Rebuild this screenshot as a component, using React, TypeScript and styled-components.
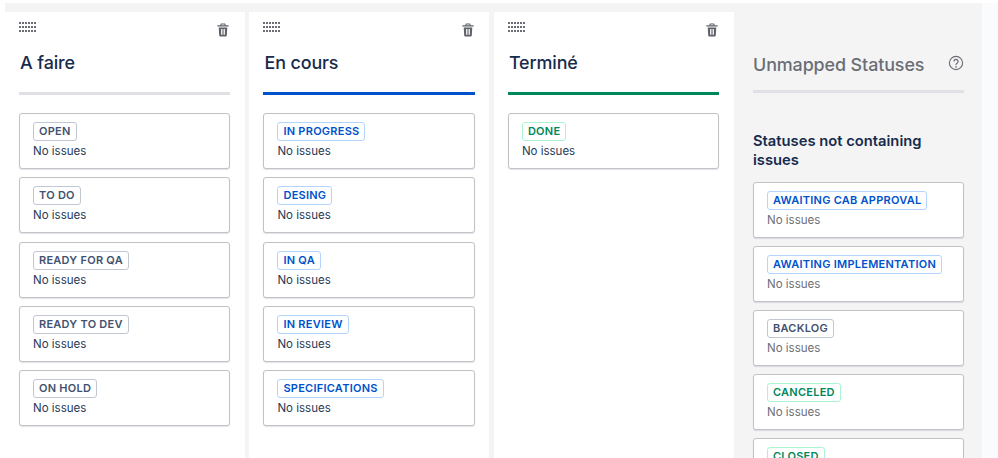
import React from 'react';
import styled, {createGlobalStyle} from 'styled-components';

const GlobalStyle = createGlobalStyle`
  html, body {
    margin: 0;
    padding: 0;
    background: #fff;
    font-family: Inter, "Liberation Sans", sans-serif;
    overflow: hidden;
  }
`

const Page = styled.div`
  width: 998px;
  height: 458px;
  padding: 3px 16px 0 5px;
  box-sizing: border-box;
  overflow: hidden;
`

const Board = styled.div`
  display: flex;
  gap: 4.45px;
  height: 455px;
  padding-top: 9px;
  box-sizing: border-box;
  background: #f4f4f5;
  box-shadow: 16px 0 0 #fafbfc;
`

const Column = styled.section`
  flex: 0 0 240px;
  padding: 0 14.8px 0 14px;
  box-sizing: border-box;
  background: #fff;
`

const ColumnTools = styled.div`
  display: flex;
  justify-content: space-between;
  height: 31px;
  padding-top: 10px;
  box-sizing: border-box;
`

const Trash = styled.svg`
  width: 12px;
  height: 14px;
  margin: 1px 1px 0 0;
  color: #5e6168;
`

const ColumnTitle = styled.h2<{$muted?: boolean}>`
  display: flex;
  justify-content: space-between;
  align-items: center;
  margin: 0;
  padding-left: ${props => props.$muted ? '0' : '1px'};
  height: 38px;
  font-size: 17.9px;
  font-weight: 500;
  line-height: 39px;
  letter-spacing: -0.1px;
  color: ${props => props.$muted ? '#6b6e76' : '#172b4d'};
`

const Rule = styled.div<{$color: string, $top: number}>`
  height: 3px;
  margin-top: ${props => props.$top}px;
  background: ${props => props.$color};
`

const CardList = styled.div<{$top: number, $gap: number}>`
  display: flex;
  flex-direction: column;
  gap: ${props => props.$gap}px;
  margin-top: ${props => props.$top}px;
`

const Card = styled.div`
  height: 56px;
  padding: 8px 13px 0;
  box-sizing: border-box;
  background: #fff;
  border: 1px solid #c1c2c6;
  border-radius: 3px;
  box-shadow: 0 1px 1px rgba(9, 30, 66, 0.12);
`

const tones = {
  grey: {text: '#42526e', border: '#c1c7d0'},
  blue: {text: '#0052cc', border: '#b3d4ff'},
  green: {text: '#00875a', border: '#abf5d1'}
}

const Lozenge = styled.span<{$tone: keyof typeof tones}>`
  display: block;
  width: fit-content;
  height: 19px;
  padding: 0 5px;
  box-sizing: border-box;
  font-size: 11px;
  font-weight: 600;
  line-height: 17px;
  letter-spacing: 0.25px;
  white-space: nowrap;
  background: #fff;
  color: ${props => tones[props.$tone].text};
  border: 1px solid ${props => tones[props.$tone].border};
  border-radius: 3px;
`

const IssueCount = styled.p<{$muted?: boolean}>`
  margin: 1px 0 0;
  font-size: 11.5px;
  line-height: 18px;
  color: ${props => props.$muted ? '#6b6e76' : '#253858'};
`

const UnmappedColumn = styled.section`
  flex: 1;
  min-width: 0;
  padding: 0 18px 0 14.7px;
  box-sizing: border-box;
`

const UnmappedHead = styled.div`
  padding-top: 33px;
`

const HelpIcon = styled.svg`
  width: 16px;
  height: 16px;
  margin-top: -2px;
  color: #6b6e76;
`

const SubTitle = styled.h3`
  margin: 38.5px 0 11.1px;
  font-size: 14.75px;
  font-weight: 600;
  line-height: 19.5px;
  color: #172b4d;
`

const DragDots = () => (
    <svg width="18" height="11" viewBox="0 0 18 11" fill="#6b6e76">
        {[0, 4, 8].map(y => [0, 3, 6, 9, 12, 15].map(x => (
            <rect key={`${x}-${y}`} x={x} y={y} width="2" height="2"/>
        )))}
    </svg>
)

const TrashIcon = () => (
    <Trash viewBox="0 0 14 16" fill="currentColor">
        <path d="M5 0.5h4a1 1 0 0 1 1 1V2.5h3a.6.6 0 0 1 0 1.5H1a.6.6 0 0 1 0-1.5h3V1.5a1 1 0 0 1 1-1zM5.2 1.6v.9h3.6v-.9z"/>
        <path fillRule="evenodd" d="M2 5h10l-.6 9.4a1.3 1.3 0 0 1-1.3 1.2H3.9a1.3 1.3 0 0 1-1.3-1.2zM4.8 6.8v6.8h1V6.8zM6.5 6.8v6.8h1V6.8zM8.2 6.8v6.8h1V6.8z"/>
    </Trash>
)

interface Status {
    name: string
    tone: keyof typeof tones
}

const StatusCard = (props: Status & {muted?: boolean}) => (
    <Card>
        <Lozenge $tone={props.tone}>{props.name}</Lozenge>
        <IssueCount $muted={props.muted}>No issues</IssueCount>
    </Card>
)

const columns: {title: string, rule: string, tone: keyof typeof tones, statuses: string[]}[] = [
    {title: 'A faire', rule: '#dfe1e6', tone: 'grey', statuses: ['OPEN', 'TO DO', 'READY FOR QA', 'READY TO DEV', 'ON HOLD']},
    {title: 'En cours', rule: '#0052cc', tone: 'blue', statuses: ['IN PROGRESS', 'DESING', 'IN QA', 'IN REVIEW', 'SPECIFICATIONS']},
    {title: 'Terminé', rule: '#00875a', tone: 'green', statuses: ['DONE']}
]

const unmapped: Status[] = [
    {name: 'AWAITING CAB APPROVAL', tone: 'blue'},
    {name: 'AWAITING IMPLEMENTATION', tone: 'blue'},
    {name: 'BACKLOG', tone: 'grey'},
    {name: 'CANCELED', tone: 'green'},
    {name: 'CLOSED', tone: 'green'}
]

const App = () => {
    return (
        <Page>
            <GlobalStyle/>
            <Board>
                {columns.map(column => (
                    <Column key={column.title}>
                        <ColumnTools>
                            <DragDots/>
                            <TrashIcon/>
                        </ColumnTools>
                        <ColumnTitle>{column.title}</ColumnTitle>
                        <Rule $color={column.rule} $top={11}/>
                        <CardList $top={18} $gap={8.25}>
                            {column.statuses.map(name => (
                                <StatusCard key={name} name={name} tone={column.tone}/>
                            ))}
                        </CardList>
                    </Column>
                ))}
                <UnmappedColumn>
                    <UnmappedHead>
                        <ColumnTitle $muted>
                            Unmapped Statuses
                            <HelpIcon viewBox="0 0 17 17" fill="none" stroke="currentColor">
                                <circle cx="8.5" cy="8.5" r="7" strokeWidth="1.2"/>
                                <path d="M6.3 6.8a2.2 2.2 0 1 1 3.4 1.9c-.8.5-1.2 1-1.2 1.8" strokeWidth="1.3"/>
                                <circle cx="8.5" cy="12.6" r=".9" fill="currentColor" stroke="none"/>
                            </HelpIcon>
                        </ColumnTitle>
                        <Rule $color="#dfe1e6" $top={7}/>
                    </UnmappedHead>
                    <SubTitle>Statuses not containing issues</SubTitle>
                    <CardList $top={0} $gap={8.2}>
                        {unmapped.map(status => (
                            <StatusCard key={status.name} {...status} muted/>
                        ))}
                    </CardList>
                </UnmappedColumn>
            </Board>
        </Page>
    );
};

export default App;
